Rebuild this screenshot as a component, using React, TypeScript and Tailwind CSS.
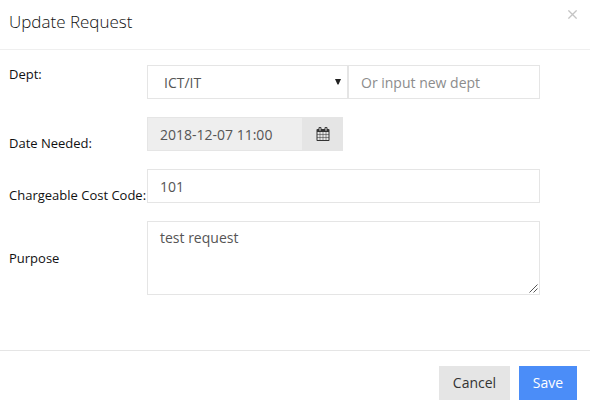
import React from "react";

const field =
  "border border-[#e5e5e5] px-3 text-[14px] leading-5 text-[#555] outline-none rounded-none";

function CalendarIcon() {
  return (
    <svg viewBox="0 0 1792 1792" className="size-3.5 fill-[#333]">
      <path d="M192 1664h288v-288h-288v288zm352 0h320v-288h-320v288zm-352-352h288v-320h-288v320zm352 0h320v-320h-320v320zm-352-384h288v-288h-288v288zm736 736h320v-288h-320v288zm-384-736h320v-288h-320v288zm768 736h288v-288h-288v288zm-384-352h320v-320h-320v320zm-352-864v-288q0-13-9.5-22.5t-22.5-9.5h-64q-13 0-22.5 9.5t-9.5 22.5v288q0 13 9.5 22.5t22.5 9.5h64q13 0 22.5-9.5t9.5-22.5zm736 864h288v-320h-288v320zm-384-384h320v-288h-320v288zm384 0h288v-288h-288v288zm32-480v-288q0-13-9.5-22.5t-22.5-9.5h-64q-13 0-22.5 9.5t-9.5 22.5v288q0 13 9.5 22.5t22.5 9.5h64q13 0 22.5-9.5t9.5-22.5zm384-64v1280q0 52-38 90t-90 38h-1408q-52 0-90-38t-38-90v-1280q0-52 38-90t90-38h128v-96q0-66 47-113t113-47h64q66 0 113 47t47 113v96h384v-96q0-66 47-113t113-47h64q66 0 113 47t47 113v96h128q52 0 90 38t38 90z" />
    </svg>
  );
}

function Row({ label, size, pad, children }: { label: string; size: string; pad: string; children: React.ReactNode }) {
  return (
    <div className={`flex shrink-0 items-start ${size}`}>
      <label className={`w-[138px] shrink-0 whitespace-nowrap text-[13px] leading-5 text-[#111] ${pad}`}>
        {label}
      </label>
      {children}
    </div>
  );
}

export default function App() {
  return (
    <div className="flex h-[409px] w-[590px] flex-col overflow-hidden bg-white font-['Open_Sans','Noto_Sans',sans-serif]">
      <header className="flex h-[50px] shrink-0 items-start justify-between border-b border-[#efefef] pl-[9px] pr-[13px]">
        <h4 className="pt-[9px] text-[17px] font-light leading-[26px] text-[#111]">Update Request</h4>
        <button aria-label="Close" className="pt-[10px]">
          <svg viewBox="0 0 9 9" className="size-[9px] fill-none stroke-[#c4c4c4] stroke-[1.3]">
            <path d="M.4 .4 8.6 8.6M8.6 .4 .4 8.6" />
          </svg>
        </button>
      </header>

      <main className="flex h-[300px] shrink-0 flex-col gap-[18px] pl-[9px] pt-[15px]">
        <Row label="Dept:" size="h-[34px]" pad="-mt-px">
          <div className="relative h-[34px] w-[201px]">
            <select className={`${field} h-[34px] w-full appearance-none bg-white pl-4 pt-0.5`}>
              <option>ICT/IT</option>
            </select>
            <svg viewBox="0 0 6 6" className="pointer-events-none absolute right-[7px] top-[14px] size-[6px] fill-[#222]">
              <path d="M0 0H6L3.5 5.5H2.5Z" />
            </svg>
          </div>
          <input className={`${field} h-[34px] w-[192px] bg-white placeholder:text-[#8c8c8c]`} placeholder="Or input new dept" />
        </Row>
        <Row label="Date Needed:" size="h-[34px]" pad="pt-[16px]">
          <input readOnly defaultValue="2018-12-07 11:00" className={`${field} h-[34px] w-[155px] border-r-0 bg-[#eee]`} />
          <span className="flex h-[34px] w-[41px] items-center justify-center bg-[#e5e5e5]">
            <CalendarIcon />
          </span>
        </Row>
        <Row label="Chargeable Cost Code:" size="h-[34px]" pad="pt-[16px]">
          <input defaultValue="101" className={`${field} h-[34px] w-[393px] bg-white`} />
        </Row>
        <Row label="Purpose" size="h-[74px]" pad="pt-[27px]">
          <div className="relative h-[74px] w-[393px]">
            <textarea defaultValue="test request" className={`${field} block h-[74px] w-full resize-none bg-white py-1.5`} />
            <svg viewBox="0 0 9 9" className="pointer-events-none absolute bottom-[2px] right-[2px] size-[9px] fill-none stroke-[#444] stroke-[0.9]">
              <path d="M.5 8.5 8.5 .5M4.5 8.5 8.5 4.5" />
            </svg>
          </div>
        </Row>
      </main>

      <footer className="flex grow items-start justify-end gap-[9px] border-t border-[#e5e5e5] pr-[13px] pt-[15px] text-[14px] leading-5">
        <button className="h-[34px] w-[71px] bg-[#e5e5e5] text-[#333]">Cancel</button>
        <button className="h-[34px] w-[58px] bg-[#4b8df8] text-white">Save</button>
      </footer>
    </div>
  );
}
